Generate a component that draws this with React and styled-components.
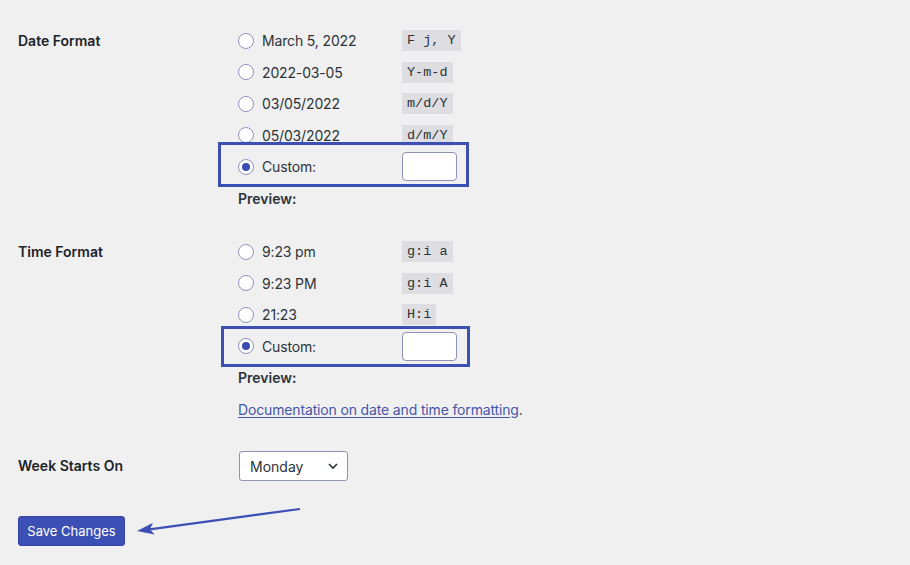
import React from 'react';
import styled, { createGlobalStyle } from 'styled-components';

const GlobalStyle = createGlobalStyle`
  body {
    margin: 0;
    background: #f0f0f1;
    font-family: Inter, "Liberation Sans", sans-serif;
    color: #1d2327;
  }
`;

const Page = styled.div`
  padding: 25px 18px 0 18px;
`;

const FormRow = styled.div`
  display: grid;
  grid-template-columns: 220px 1fr;
  margin-bottom: ${(p) => p.gap || 0}px;
`;

const Label = styled.div`
  font-size: 14px;
  font-weight: 600;
  line-height: 31.5px;
  color: #1d2327;
`;

const Fieldset = styled.div`
  display: flex;
  flex-direction: column;
`;

const Option = styled.label`
  position: relative;
  display: flex;
  align-items: center;
  height: 31.5px;
  font-size: 14px;
  letter-spacing: -0.15px;
  color: #2c3338;
`;

const Radio = styled.span`
  width: 16px;
  height: 16px;
  box-sizing: border-box;
  border-radius: 50%;
  border: 1px solid #9093b9;
  background: #fff;
  margin-right: 8px;
  display: flex;
  align-items: center;
  justify-content: center;

  &::after {
    content: '';
    display: ${(p) => (p.checked ? 'block' : 'none')};
    width: 8px;
    height: 8px;
    border-radius: 50%;
    background: #3a4db3;
  }
`;

const OptionText = styled.span`
  width: 140px;
`;

const Code = styled.code`
  font-family: "Liberation Mono", "DejaVu Sans Mono", monospace;
  font-size: 13.5px;
  letter-spacing: 0;
  background: #dddde2;
  padding: 3px 5px;
  color: #2c3338;
`;

const TextInput = styled.span`
  display: block;
  width: 55px;
  height: 29px;
  box-sizing: border-box;
  background: #fff;
  border: 1px solid #8f92b3;
  border-radius: 4px;
`;

const Highlight = styled.span`
  position: absolute;
  top: ${(p) => p.top}px;
  bottom: ${(p) => p.bottom}px;
  left: ${(p) => p.left}px;
  width: ${(p) => p.width}px;
  border: 3px solid #3c4fb5;
  box-sizing: border-box;
  pointer-events: none;
`;

const Preview = styled.div`
  height: 31.5px;
  line-height: 31.5px;
  font-size: 14px;
  font-weight: 600;
  color: #2c3338;
`;

const DocLink = styled.a`
  height: 31.5px;
  line-height: 31.5px;
  font-size: 14px;
  letter-spacing: -0.15px;
  color: #2c3338;

  span {
    color: #4656aa;
    text-decoration: underline;
    text-underline-offset: 2px;
  }
`;

const Select = styled.div`
  width: 109px;
  height: 30px;
  box-sizing: border-box;
  margin: 1px 0 0 1px;
  background: #fff;
  border: 1px solid #8f92b3;
  border-radius: 3px;
  display: flex;
  align-items: center;
  justify-content: space-between;
  padding: 0 8px 0 10px;
  font-size: 14px;
  color: #2c3338;
`;

const Actions = styled.div`
  position: relative;
  margin-top: 34px;
`;

const Button = styled.button`
  width: 107px;
  height: 30px;
  background: #3c4fb5;
  color: #fff;
  border: 1px solid #3447a8;
  border-radius: 3px;
  font-family: Inter, "Liberation Sans", sans-serif;
  font-size: 13px;
  padding: 0;
`;

const Arrow = styled.svg`
  position: absolute;
  left: 104px;
  top: -10px;
`;

const dateOptions = [
  ['March 5, 2022', 'F j, Y'],
  ['2022-03-05', 'Y-m-d'],
  ['03/05/2022', 'm/d/Y'],
  ['05/03/2022', 'd/m/Y'],
];

const timeOptions = [
  ['9:23 pm', 'g:i a'],
  ['9:23 PM', 'g:i A'],
  ['21:23', 'H:i'],
];

const FormatGroup = ({ options, box }) => (
  <Fieldset>
    {options.map(([text, code]) => (
      <Option key={text}>
        <Radio />
        <OptionText>{text}</OptionText>
        <Code>{code}</Code>
      </Option>
    ))}
    <Option>
      <Radio checked />
      <OptionText>Custom:</OptionText>
      <TextInput />
      <Highlight {...box} />
    </Option>
    <Preview>Preview:</Preview>
  </Fieldset>
);

export default function App() {
  return (
    <Page>
      <GlobalStyle />
      <FormRow gap={22}>
        <Label>Date Format</Label>
        <FormatGroup
          options={dateOptions}
          box={{ top: -9, bottom: -4, left: -20, width: 251 }}
        />
      </FormRow>
      <FormRow gap={25}>
        <Label>Time Format</Label>
        <Fieldset>
          <FormatGroup
            options={timeOptions}
            box={{ top: -5, bottom: -5, left: -17, width: 249 }}
          />
          <DocLink>
            <span>Documentation on date and time formatting</span>.
          </DocLink>
        </Fieldset>
      </FormRow>
      <FormRow>
        <Label>Week Starts On</Label>
        <Select>
          Monday
          <svg width="12" height="8" viewBox="0 0 12 8">
            <path d="M2 2l4 4 4-4" fill="none" stroke="#2c3338" strokeWidth="1.6" />
          </svg>
        </Select>
      </FormRow>
      <Actions>
        <Button>Save Changes</Button>
        <Arrow width="190" height="40" viewBox="0 0 190 40">
          <path d="M178 3 L24 23.8" stroke="#3c4fb5" strokeWidth="2.2" fill="none" />
          <path d="M15 25 L31 16.7 L27.9 23.3 L32.6 28.6 Z" fill="#3c4fb5" />
        </Arrow>
      </Actions>
    </Page>
  );
}
